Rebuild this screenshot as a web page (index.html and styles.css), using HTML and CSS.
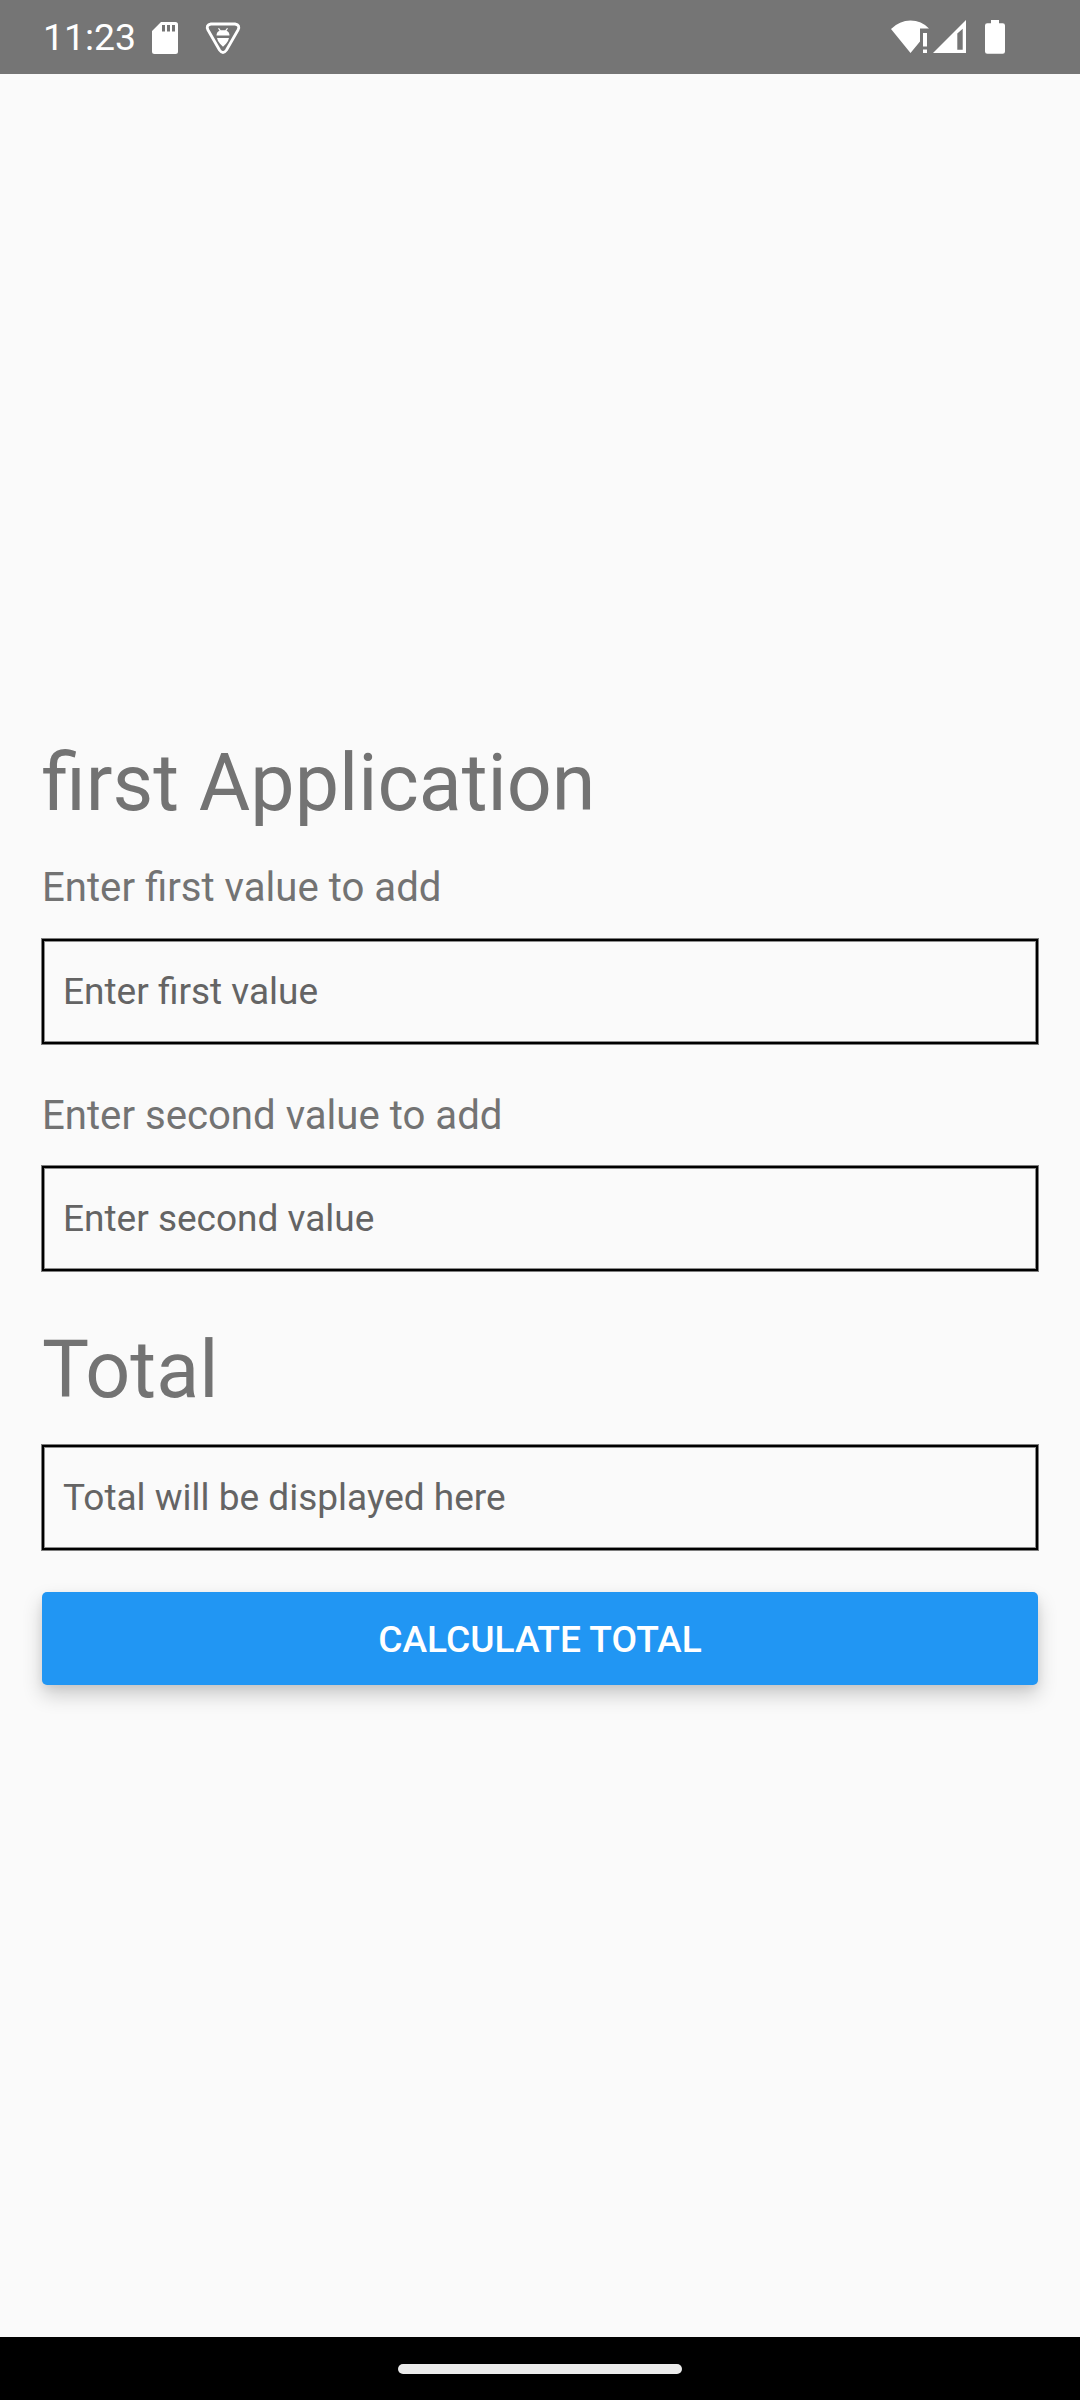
FILE: index.html
```html
<!DOCTYPE html>
<html lang="en">
<head>
<meta charset="utf-8">
<title>first Application</title>
<link rel="stylesheet" href="styles.css">
</head>
<body>
<header class="status-bar">
  <div class="status-left">
    <span class="clock">11:23</span>
    <svg class="sd-icon" viewBox="0 0 26 32"><path fill="#fff" fill-rule="evenodd" d="M9 0H23.500Q26 0 26 2.500V29.500Q26 32 23.500 32H2.500Q0 32 0 29.500V9ZM10 3V9.500H13V3ZM15 3V9.500H18V3ZM20 3V9.500H23V3Z"/></svg>
    <svg class="debug-icon" viewBox="0 0 36 34"><path fill="none" stroke="#fff" stroke-width="2.800" stroke-linejoin="round" d="M6 3H30Q35.500 4 33 9L21.500 29Q18 34 14.500 29L3 9Q.5 4 6 3Z"/><path fill="#fff" d="M11.500 14.500Q11.500 11 14.500 9.700L13 7.500L14 7L15.700 9.200H20.300L22 7L23 7.500L21.500 9.700Q24.500 11 24.500 14.500ZM12 17H24Q23.500 20 21 22.800L18 25.800L15 22.800Q12.500 20 12 17Z"/></svg>
  </div>
  <div class="status-right">
    <svg class="wifi-icon" viewBox="0 0 38 34"><path fill="#fff" d="M0 9Q8.500 .5 19.500 .5Q30.500 .5 38 8.500H29V21.500L19.500 33ZM32 13H36V26.500H32ZM32 29.500H36V33H32Z"/></svg>
    <svg class="signal-icon" viewBox="0 0 33 33"><path fill="#fff" fill-rule="evenodd" d="M33 0V33H0ZM29.700 8.700L24.300 13.500V29.700H29.700Z"/></svg>
    <svg class="battery-icon" viewBox="0 0 20 34"><path fill="#fff" d="M6 0H14V3.300H17.700Q20 3.300 20 5.600V31.500Q20 33.800 17.700 33.800H2.300Q0 33.800 0 31.500V5.600Q0 3.300 2.300 3.300H6Z"/></svg>
  </div>
</header>
<main class="content">
  <h1 class="title">first Application</h1>
  <label class="label" for="first">Enter first value to add</label>
  <input class="field" id="first" placeholder="Enter first value">
  <label class="label label-second" for="second">Enter second value to add</label>
  <input class="field field-second" id="second" placeholder="Enter second value">
  <h1 class="title title-total">Total</h1>
  <input class="field field-total" placeholder="Total will be displayed here" aria-label="Total">
  <button class="button">CALCULATE TOTAL</button>
</main>
<footer class="nav-bar"><div class="nav-handle"></div></footer>
</body>
</html>
```
FILE: styles.css
```css
* { box-sizing: border-box; }
body {
  margin: 0;
  width: 1080px;
  height: 2400px;
  display: flex;
  flex-direction: column;
  background: #fafafa;
  color: #737373;
  font-family: Roboto, sans-serif;
}
.status-bar {
  height: 74px;
  background: #757575;
  display: flex;
  justify-content: space-between;
  padding: 0 75px 0 43px;
}
.status-left, .status-right { display: flex; align-items: flex-start; }
.clock {
  width: 109px;
  padding-top: 15px;
  color: #fff;
  font-size: 37.400px;
  line-height: 45px;
}
.sd-icon { width: 26px; height: 32px; margin-top: 22px; }
.debug-icon { width: 36px; height: 34px; margin: 21px 0 0 27px; }
.wifi-icon { width: 38px; height: 34px; margin-top: 20px; }
.signal-icon { width: 33px; height: 33px; margin: 20px 0 0 4px; }
.battery-icon { width: 20px; height: 34px; margin: 20px 0 0 19px; }
.content {
  flex: 1;
  display: flex;
  flex-direction: column;
  padding: 663px 41px 0;
}
.title {
  margin: 0;
  padding-left: 1px;
  font-size: 79px;
  font-weight: 400;
  line-height: 92px;
}
.label {
  margin-top: 35px;
  padding-left: 1px;
  font-size: 40.150px;
  line-height: 47px;
}
.field {
  height: 107px;
  margin: 27px 0 0;
  padding: 0 22px 1px;
  border: 0;
  border-radius: 0;
  background: transparent;
  box-shadow: inset 0 0 0 1px #7d7d7d, inset 0 0 0 3px #000, inset 0 0 0 4px #8c8c8c;
  font: 37px Roboto, sans-serif;
  outline: 0;
}
.field::placeholder { color: #646464; opacity: 1; }
.label-second { margin-top: 47px; }
.field-second { margin-top: 26px; }
.title-total { margin-top: 52px; }
.field-total { margin-top: 28px; }
.button {
  height: 93px;
  margin: 41px 1px 0;
  padding: 2px 0 0;
  border: 0;
  border-radius: 5px;
  background: #2196f3;
  box-shadow: 0 10px 20px rgba(0, 0, 0, .19), 0 3px 8px rgba(0, 0, 0, .06);
  color: #fff;
  font: 500 37.150px Roboto, sans-serif;
}
.nav-bar {
  height: 63px;
  background: #000;
  display: flex;
  justify-content: center;
  align-items: flex-start;
  padding-top: 27px;
}
.nav-handle { width: 284px; height: 10px; border-radius: 5px; background: #ebebeb; }
```
